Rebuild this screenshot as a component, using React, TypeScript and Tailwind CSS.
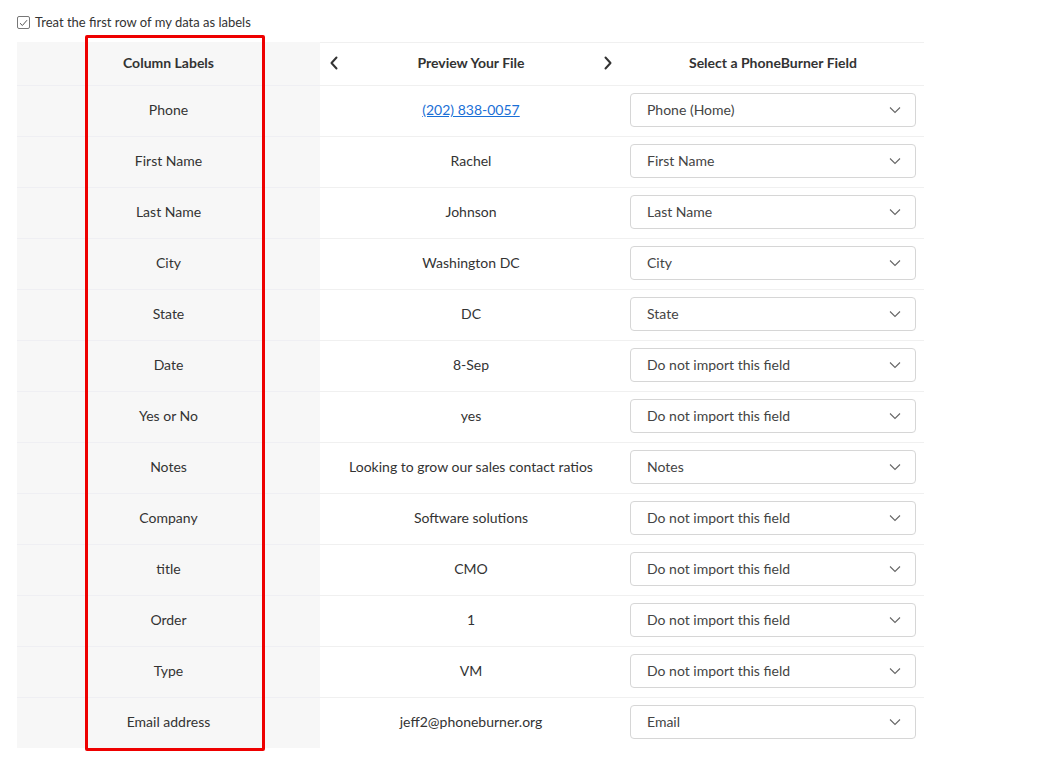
import React from "react";

// Column mapping table for the contact import step.

type Row = { label: string; preview: string; field: string; link?: boolean };

const rows: Row[] = [
  { label: "Phone", preview: "(202) 838-0057", field: "Phone (Home)", link: true },
  { label: "First Name", preview: "Rachel", field: "First Name" },
  { label: "Last Name", preview: "Johnson", field: "Last Name" },
  { label: "City", preview: "Washington DC", field: "City" },
  { label: "State", preview: "DC", field: "State" },
  { label: "Date", preview: "8-Sep", field: "Do not import this field" },
  { label: "Yes or No", preview: "yes", field: "Do not import this field" },
  { label: "Notes", preview: "Looking to grow our sales contact ratios", field: "Notes" },
  { label: "Company", preview: "Software solutions", field: "Do not import this field" },
  { label: "title", preview: "CMO", field: "Do not import this field" },
  { label: "Order", preview: "1", field: "Do not import this field" },
  { label: "Type", preview: "VM", field: "Do not import this field" },
  { label: "Email address", preview: "jeff2@phoneburner.org", field: "Email" },
];

function Chevron({ dir }: { dir: "left" | "right" }) {
  return (
    <svg width="10" height="14" viewBox="0 0 10 14" fill="none">
      <path
        d={dir === "left" ? "M7.5 1.5 2.5 7l5 5.5" : "M2.5 1.5 7.5 7l-5 5.5"}
        stroke="#333"
        strokeWidth="2"
        strokeLinecap="round"
        strokeLinejoin="round"
      />
    </svg>
  );
}

function FieldSelect({ value }: { value: string }) {
  return (
    <div className="flex h-[34px] w-full items-center justify-between rounded-[4px] border border-[#d6d6d6] bg-white pl-[16px] pr-[14px] text-[14px] text-[#444]">
      <span>{value}</span>
      <svg width="12" height="8" viewBox="0 0 12 8" fill="none">
        <path d="M1 1.5 6 6.5l5-5" stroke="#666" strokeWidth="1.1" />
      </svg>
    </div>
  );
}

export default function App() {
  return (
    <div
      className="relative min-h-[771px] w-[1064px] bg-white text-[#333]"
      style={{ fontFamily: "Lato, 'Liberation Sans', sans-serif" }}
    >
      <div className="px-[17px] pt-[13px]">
        <label className="flex items-center gap-[5px] text-[13px] text-[#333]">
          <span className="flex h-[13px] w-[13px] items-center justify-center rounded-[2px] border border-[#777] bg-white">
            <svg width="9" height="8" viewBox="0 0 9 8" fill="none">
              <path d="M1 4.2 3.4 6.5 8 1.2" stroke="#555" strokeWidth="1" />
            </svg>
          </span>
          Treat the first row of my data as labels
        </label>

        <div className="mt-[9px] grid w-[907px] grid-cols-[303px_302px_302px]">
          {/* Header */}
          <div className="flex h-[43px] items-center justify-center bg-[#f7f7f7] pb-[2px] text-[14px] font-bold text-[#333]">
            Column Labels
          </div>
          <div className="flex h-[43px] items-center justify-between border-t border-[#f0f0f0] px-[9px] pb-[2px] text-[14px] font-bold">
            <Chevron dir="left" />
            <span>Preview Your File</span>
            <Chevron dir="right" />
          </div>
          <div className="flex h-[43px] items-center justify-center border-t border-[#f0f0f0] pb-[2px] text-[14px] font-bold">
            Select a PhoneBurner Field
          </div>

          {rows.map((r) => (
            <React.Fragment key={r.label}>
              <div className="flex h-[51px] items-center justify-center border-t border-[#efeff3] bg-[#f7f7f7] pb-[2px] text-[14px] text-[#333]">
                {r.label}
              </div>
              <div className="flex h-[51px] items-center justify-center border-t border-[#f0f0f0] pb-[2px] text-[14px] text-[#333]">
                {r.link ? (
                  <a href="#" className="text-[#1a6fd6] underline">
                    {r.preview}
                  </a>
                ) : (
                  r.preview
                )}
              </div>
              <div className="flex h-[51px] items-center border-t border-[#f0f0f0] px-[8px] pb-[2px]">
                <FieldSelect value={r.field} />
              </div>
            </React.Fragment>
          ))}
        </div>
      </div>

      {/* highlight over the labels column */}
      <div className="pointer-events-none absolute left-[85px] top-[35px] h-[716px] w-[180px] rounded-[2px] border-[3px] border-[#ee0000]" />
    </div>
  );
}
